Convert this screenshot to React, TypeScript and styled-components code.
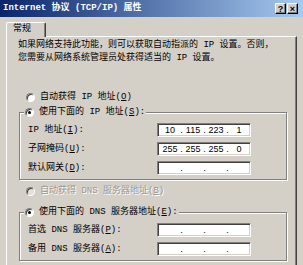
import React from "react";
import styled, { createGlobalStyle } from "styled-components";

const GlobalStyle = createGlobalStyle`
  html, body { margin: 0; padding: 0; background: #d4d0c8; }
  body { font-family: "Liberation Mono", "Noto Sans CJK SC", monospace; font-size: 9px; }
`;

const Window = styled.div`
  width: 303px;
  height: 265px;
  overflow: hidden;
  background: #d4d0c8;
  color: #000;
  display: flex;
  flex-direction: column;
  font-family: "Liberation Mono", "Noto Sans CJK SC", monospace;
  font-size: 9px;
  line-height: 13px;
`;

const TitleBar = styled.div`
  flex: none;
  height: 17px;
  box-sizing: border-box;
  display: grid;
  grid-template-columns: 1fr auto;
  align-items: center;
  padding: 0 4px 0 3px;
  background: linear-gradient(90deg, #0a246a 0%, #a6caf0 100%);
`;

const Title = styled.span`
  color: #fff;
  font-weight: bold;
  white-space: nowrap;
`;

const Controls = styled.div`
  display: flex;
  gap: 1px;
  padding: 1px;
`;

const CapButton = styled.div`
  width: 11px;
  height: 11px;
  box-sizing: border-box;
  display: flex;
  align-items: center;
  justify-content: center;
  background: #d4d0c8;
  border-top: 1px solid #fff;
  border-left: 1px solid #fff;
  border-right: 1px solid #000;
  border-bottom: 1px solid #000;
  box-shadow: inset -1px -1px 0 #808080;
  font-family: "Liberation Sans", sans-serif;
  font-weight: bold;
  font-size: 9px;
  line-height: 8px;
  color: #000;
`;

const Body = styled.div`
  flex: 1;
  display: flex;
  flex-direction: column;
  padding: 5px 6px 0 6px;
`;

const TabRow = styled.div`
  display: flex;
`;

const Tab = styled.div`
  position: relative;
  z-index: 1;
  width: 40px;
  height: 15px;
  box-sizing: border-box;
  padding-left: 6px;
  margin-bottom: -1px;
  background: #d4d0c8;
  border-top: 1px solid #fff;
  border-left: 1px solid #fff;
  border-right: 1px solid #404040;
  border-radius: 2px 2px 0 0;
  box-shadow: inset -1px 0 0 #808080;
`;

const Panel = styled.div`
  flex: 1;
  display: flex;
  flex-direction: column;
  align-items: flex-start;
  padding: 2px 0 0 11px;
  border-top: 1px solid #fff;
  border-left: 1px solid #fff;
  border-right: 1px solid #404040;
  box-shadow: inset -1px 0 0 #808080;
`;

const Intro = styled.p`
  margin: 0;
  white-space: nowrap;
  line-height: 13px;
`;

const Option = styled.div<{ $top?: number; $indent?: number; $disabled?: boolean }>`
  display: flex;
  align-items: center;
  gap: 5px;
  height: 13px;
  margin-top: ${(p) => p.$top ?? 0}px;
  margin-left: ${(p) => p.$indent ?? 0}px;
  white-space: nowrap;
  color: ${(p) => (p.$disabled ? "#9a9893" : "#000")};
  text-shadow: ${(p) => (p.$disabled ? "1px 1px 0 #fff" : "none")};
`;

const Radio = styled.span<{ $checked?: boolean; $disabled?: boolean }>`
  width: 9px;
  height: 9px;
  box-sizing: border-box;
  border-radius: 50%;
  display: grid;
  place-items: center;
  background: ${(p) => (p.$disabled ? "#e4e1db" : "#fff")};
  border: 1px solid;
  border-color: #808080 #fff #fff #808080;
  box-shadow: inset 1px 1px 0 #404040;
  &::after {
    content: "";
    width: 3px;
    height: 3px;
    border-radius: 50%;
    background: ${(p) => (p.$checked ? "#000" : "transparent")};
  }
`;

const Key = styled.span`
  text-decoration: underline;
`;

const GroupBox = styled.fieldset<{ $top: number }>`
  width: 268px;
  box-sizing: border-box;
  margin: ${(p) => p.$top}px 0 0 1px;
  padding: 4px 8px 4px 8px;
  border: 1px solid #808080;
  box-shadow: 1px 1px 0 #fff, inset 1px 1px 0 #fff;
  min-inline-size: 0;
`;

const Legend = styled.legend`
  padding: 0 1px;
  margin-left: -4px;
  background: #d4d0c8;
`;

const Fields = styled.div`
  display: grid;
  grid-template-columns: 129px 94px;
  row-gap: 5px;
  align-items: center;
`;

const FieldLabel = styled.span`
  white-space: nowrap;
`;

const IpBox = styled.div`
  height: 14px;
  box-sizing: border-box;
  display: flex;
  align-items: center;
  background: #fff;
  border: 1px solid;
  border-color: #808080 #fff #fff #808080;
  box-shadow: inset 1px 1px 0 #404040, inset -1px -1px 0 #d4d0c8;
  font-family: "Liberation Sans", sans-serif;
  font-size: 9px;
  color: #000;
  padding: 0 1px 0 2px;
`;

const Segment = styled.span`
  flex: 1;
  text-align: center;
`;

const Dot = styled.span`
  width: 3px;
  text-align: center;
`;

const IpField = ({ value }: { value: string[] }) => (
  <IpBox>
    <Segment>{value[0]}</Segment>
    <Dot>.</Dot>
    <Segment>{value[1]}</Segment>
    <Dot>.</Dot>
    <Segment>{value[2]}</Segment>
    <Dot>.</Dot>
    <Segment>{value[3]}</Segment>
  </IpBox>
);

const empty = ["", "", "", ""];

export default function App() {
  return (
    <>
      <GlobalStyle />
      <Window>
        <TitleBar>
          <Title>Internet 协议 (TCP/IP) 属性</Title>
          <Controls>
            <CapButton>?</CapButton>
            <CapButton>×</CapButton>
          </Controls>
        </TitleBar>
        <Body>
          <TabRow>
            <Tab>常规</Tab>
          </TabRow>
          <Panel>
            <Intro>
              如果网络支持此功能，则可以获取自动指派的 IP 设置。否则，
              <br />
              您需要从网络系统管理员处获得适当的 IP 设置。
            </Intro>
            <Option $top={26} $indent={8}>
              <Radio />
              <span>
                自动获得 IP 地址(<Key>O</Key>)
              </span>
            </Option>
            <GroupBox $top={2}>
              <Legend>
                <Option>
                  <Radio $checked />
                  <span>
                    使用下面的 IP 地址(<Key>S</Key>):
                  </span>
                </Option>
              </Legend>
              <Fields>
                <FieldLabel>
                  IP 地址(<Key>I</Key>):
                </FieldLabel>
                <IpField value={["10", "115", "223", "1"]} />
                <FieldLabel>
                  子网掩码(<Key>U</Key>):
                </FieldLabel>
                <IpField value={["255", "255", "255", "0"]} />
                <FieldLabel>
                  默认网关(<Key>D</Key>):
                </FieldLabel>
                <IpField value={empty} />
              </Fields>
            </GroupBox>
            <Option $top={5} $indent={8} $disabled>
              <Radio $disabled />
              <span>
                自动获得 DNS 服务器地址(<Key>B</Key>)
              </span>
            </Option>
            <GroupBox $top={8}>
              <Legend>
                <Option>
                  <Radio $checked />
                  <span>
                    使用下面的 DNS 服务器地址(<Key>E</Key>):
                  </span>
                </Option>
              </Legend>
              <Fields>
                <FieldLabel>
                  首选 DNS 服务器(<Key>P</Key>):
                </FieldLabel>
                <IpField value={empty} />
                <FieldLabel>
                  备用 DNS 服务器(<Key>A</Key>):
                </FieldLabel>
                <IpField value={empty} />
              </Fields>
            </GroupBox>
          </Panel>
        </Body>
      </Window>
    </>
  );
}
